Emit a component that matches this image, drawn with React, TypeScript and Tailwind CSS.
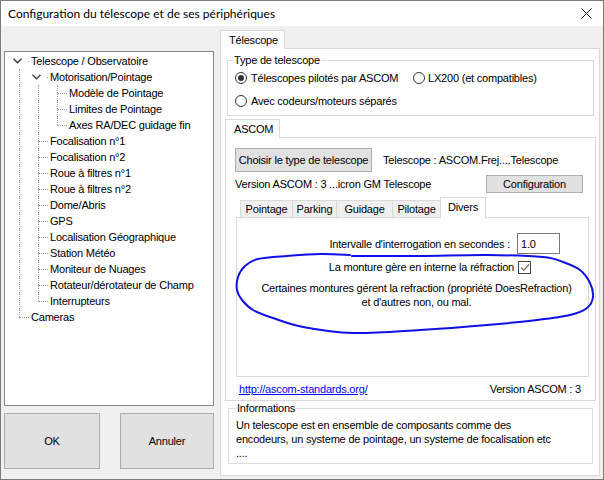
import React from 'react';

type TreeNode = {
  label: string;
  depth: number;
  anc: boolean[];
  expander?: boolean;
  last?: boolean;
};

const tree: TreeNode[] = [
  { label: 'Telescope / Observatoire', depth: 0, anc: [], expander: true },
  { label: 'Motorisation/Pointage', depth: 1, anc: [true], expander: true },
  { label: 'Modèle de Pointage', depth: 2, anc: [true, true] },
  { label: 'Limites de Pointage', depth: 2, anc: [true, true] },
  { label: 'Axes RA/DEC guidage fin', depth: 2, anc: [true, true], last: true },
  { label: 'Focalisation n°1', depth: 1, anc: [true] },
  { label: 'Focalisation n°2', depth: 1, anc: [true] },
  { label: 'Roue à filtres n°1', depth: 1, anc: [true] },
  { label: 'Roue à filtres n°2', depth: 1, anc: [true] },
  { label: 'Dome/Abris', depth: 1, anc: [true] },
  { label: 'GPS', depth: 1, anc: [true] },
  { label: 'Localisation Géographique', depth: 1, anc: [true] },
  { label: 'Station Météo', depth: 1, anc: [true] },
  { label: 'Moniteur de Nuages', depth: 1, anc: [true] },
  { label: 'Rotateur/dérotateur de Champ', depth: 1, anc: [true] },
  { label: 'Interrupteurs', depth: 1, anc: [true], last: true },
  { label: 'Cameras', depth: 0, anc: [], last: true },
];

// contour bleu dessiné à la main autour de l'explication
const loop: [number, number][] = [
  [350, 255], [320, 254], [287, 256], [258, 259], [245, 266], [238, 277], [237, 290],
  [242, 300], [253, 310], [273, 318], [303, 327], [353, 333], [420, 330], [487, 325],
  [537, 320], [570, 315], [587, 308], [593, 297], [590, 283], [580, 270], [563, 262],
  [543, 257], [487, 255], [420, 256], [352, 256],
];

function smooth(pts: [number, number][]) {
  let d = `M${pts[0][0]},${pts[0][1]}`;
  for (let i = 0; i < pts.length - 1; i++) {
    const p0 = pts[i - 1] ?? pts[i];
    const p1 = pts[i];
    const p2 = pts[i + 1];
    const p3 = pts[i + 2] ?? p2;
    const c1x = p1[0] + (p2[0] - p0[0]) / 6;
    const c1y = p1[1] + (p2[1] - p0[1]) / 6;
    const c2x = p2[0] - (p3[0] - p1[0]) / 6;
    const c2y = p2[1] - (p3[1] - p1[1]) / 6;
    d += ` C${c1x.toFixed(1)},${c1y.toFixed(1)} ${c2x.toFixed(1)},${c2y.toFixed(1)} ${p2[0]},${p2[1]}`;
  }
  return d;
}

function Chevron() {
  return (
    <svg width="9" height="6" viewBox="0 0 9 6" className="ml-[3px] shrink-0">
      <polyline points="0.5,0.8 4.5,4.8 8.5,0.8" fill="none" stroke="#3c3c3c" strokeWidth="1.3" />
    </svg>
  );
}

function TreeRow({ node }: { node: TreeNode }) {
  return (
    <div className="flex h-[16px] items-stretch">
      {node.anc.map((c, i) => (
        <div key={i} className="w-[19px] shrink-0">
          {c && <div className="ml-[9px] h-full border-l border-dotted border-[#a0a0a0]" />}
        </div>
      ))}
      {node.expander ? (
        <div className="flex w-[19px] shrink-0 items-center">
          <Chevron />
          <div className="ml-[6px] h-px w-px bg-[#a0a0a0]" />
        </div>
      ) : (
        <div className="flex w-[19px] shrink-0 flex-col">
          <div className="ml-[9px] h-[8px] border-l border-dotted border-[#a0a0a0]" />
          <div
            className={
              node.last
                ? 'ml-[9px] h-[8px] border-t border-dotted border-[#a0a0a0]'
                : 'ml-[9px] h-[8px] border-l border-t border-dotted border-[#a0a0a0]'
            }
          />
        </div>
      )}
      <span className="ml-[2px] whitespace-nowrap leading-[16px]">{node.label}</span>
    </div>
  );
}

function Radio({ checked }: { checked?: boolean }) {
  return (
    <div className="flex h-[12px] w-[12px] shrink-0 items-center justify-center rounded-full border border-[#333333] bg-white">
      {checked && <div className="h-[6px] w-[6px] rounded-full bg-[#333333]" />}
    </div>
  );
}

function Tab({ label, width, selected }: { label: string; width: string; selected?: boolean }) {
  return (
    <div
      className={
        selected
          ? `relative z-10 -mb-px flex h-[21px] ${width} items-start justify-center border-x border-t border-[#d9d9d9] bg-white pt-[2px]`
          : `flex h-[17px] ${width} items-center justify-center border-l border-t border-[#d9d9d9] bg-[#f0f0f0]`
      }
    >
      {label}
    </div>
  );
}

export default function App() {
  return (
    <div className="relative flex h-[480px] w-[604px] flex-col overflow-hidden border border-[#7a7a7a] bg-white font-['Liberation_Sans',Arial,sans-serif] text-[11px] leading-[14px] tracking-[-0.2px] text-black">
      {/* barre de titre */}
      <div className="flex h-[25px] items-center bg-white pl-[7px] pr-[11px] font-['Lato',sans-serif] text-[12px] tracking-normal">
        <span className="flex-1 whitespace-nowrap">Configuration du télescope et de ses périphériques</span>
        <svg width="11" height="11" viewBox="0 0 11 11">
          <path d="M0.5,0.5 L10.5,10.5 M10.5,0.5 L0.5,10.5" stroke="#111" strokeWidth="1" />
        </svg>
      </div>

      <div className="flex flex-1 bg-[#f0f0f0]">
        {/* colonne gauche : arbre + boutons */}
        <div className="flex flex-col pl-[3px] pt-[25px]">
          <div className="h-[355px] w-[210px] border border-[#828790] bg-white pl-[5px] pt-[1px]">
            {tree.map((n) => (
              <TreeRow key={n.label} node={n} />
            ))}
          </div>
          <div className="mt-[7px] flex gap-[20px]">
            <button className="flex h-[56px] w-[96px] items-center justify-center border border-[#adadad] bg-[#e1e1e1]">
              OK
            </button>
            <button className="flex h-[56px] w-[94px] items-center justify-center border border-[#adadad] bg-[#e1e1e1]">
              Annuler
            </button>
          </div>
        </div>

        {/* colonne droite : onglet Télescope */}
        <div className="ml-[6px] flex w-[380px] flex-col pt-[4px]">
          <div className="flex">
            <div className="relative z-10 -mb-px flex h-[19px] w-[65px] items-center border-x border-t border-[#d9d9d9] bg-white pl-[8px]">
              Télescope
            </div>
          </div>
          <div className="flex h-[428px] flex-col border border-[#d9d9d9] bg-white">
            {/* Type de telescope */}
            <div className="ml-[6px] mr-[5px] mt-[11px] h-[56px] border border-[#dcdcdc]">
              <div className="-mt-[8px] ml-[5px] w-fit bg-white px-[1px]">Type de telescope</div>
              <div className="mt-[1px] flex h-[20px] items-center pl-[7px]">
                <div className="flex w-[178px] items-center gap-[4px]">
                  <Radio checked />
                  <span className="whitespace-nowrap">Télescopes pilotés par ASCOM</span>
                </div>
                <div className="flex items-center gap-[3px]">
                  <Radio />
                  <span className="whitespace-nowrap">LX200 (et compatibles)</span>
                </div>
              </div>
              <div className="mt-[3px] flex h-[20px] items-center gap-[4px] pl-[7px]">
                <Radio />
                <span className="whitespace-nowrap">Avec codeurs/moteurs séparés</span>
              </div>
            </div>

            {/* ASCOM */}
            <div className="ml-[4px] mt-[3px] flex">
              <div className="relative z-10 -mb-px flex h-[19px] w-[55px] items-center border-x border-t border-[#d9d9d9] bg-white pl-[8px]">
                ASCOM
              </div>
            </div>
            <div className="ml-[4px] mr-[3px] flex h-[264px] flex-col border border-[#d9d9d9] bg-white">
              <div className="mt-[10px] flex items-center pl-[9px]">
                <button className="flex h-[24px] w-[137px] items-center justify-center whitespace-nowrap border border-[#adadad] bg-[#e1e1e1]">
                  Choisir le type de telescope
                </button>
                <span className="ml-[11px] whitespace-nowrap">Telescope : ASCOM.Frej....Telescope</span>
              </div>
              <div className="mt-[3px] flex h-[18px] items-center pl-[9px] pr-[12px]">
                <span className="whitespace-nowrap">Version ASCOM : 3 ...icron GM Telescope</span>
                <button className="ml-auto flex h-[18px] w-[97px] items-center justify-center border border-[#adadad] bg-[#e1e1e1]">
                  Configuration
                </button>
              </div>

              {/* onglets internes */}
              <div className="ml-[14px] mt-[4px] flex h-[20px] items-end">
                <Tab label="Pointage" width="w-[52px]" />
                <Tab label="Parking" width="w-[44px]" />
                <Tab label="Guidage" width="w-[56px]" />
                <Tab label="Pilotage" width="w-[48px]" />
                <Tab label="Divers" width="w-[46px]" selected />
              </div>
              <div className="ml-[10px] mr-[6px] flex h-[160px] flex-col border border-[#d9d9d9] bg-white">
                <div className="mr-[28px] mt-[15px] flex h-[21px] items-center justify-end gap-[7px]">
                  <span className="whitespace-nowrap">Intervalle d'interrogation en secondes :</span>
                  <div className="flex h-[21px] w-[43px] items-center border border-[#7a7a7a] pl-[3px]">1.0</div>
                </div>
                <div className="mr-[57px] mt-[3px] flex h-[20px] items-center justify-end gap-[4px]">
                  <span className="whitespace-nowrap">La monture gère en interne la réfraction</span>
                  <div className="flex h-[13px] w-[13px] items-center justify-center border border-[#444444] bg-white">
                    <svg width="10" height="9" viewBox="0 0 10 9">
                      <polyline points="1,4.5 3.8,7.2 9,1.5" fill="none" stroke="#6d6d6d" strokeWidth="1.2" />
                    </svg>
                  </div>
                </div>
                <div className="mt-[4px] pl-[8px] text-center leading-[14px]">
                  <div>Certaines montures gérent la refraction (propriété DoesRefraction)</div>
                  <div>et d'autres non, ou mal.</div>
                </div>
              </div>
              <div className="mt-[4px] flex h-[15px] items-center pl-[13px] pr-[14px]">
                <span className="whitespace-nowrap text-[#0000ff] underline">http://ascom-standards.org/</span>
                <span className="ml-auto whitespace-nowrap">Version ASCOM : 3</span>
              </div>
            </div>

            {/* Informations */}
            <div className="ml-[7px] mr-[6px] mt-[7px] h-[56px] border border-[#dcdcdc]">
              <div className="-mt-[8px] ml-[7px] w-fit bg-white px-[1px]">Informations</div>
              <div className="mt-[3px] pl-[7px] leading-[14px]">
                <div>Un telescope est en ensemble de composants comme des</div>
                <div>encodeurs, un systeme de pointage, un systeme de focalisation etc</div>
                <div>....</div>
              </div>
            </div>
          </div>
        </div>
      </div>

      <svg
        width="604"
        height="480"
        viewBox="0 0 604 480"
        className="pointer-events-none absolute left-[-1px] top-[-1px]"
      >
        <path d={smooth(loop)} fill="none" stroke="#1010e8" strokeWidth="2" strokeLinejoin="round" strokeLinecap="round" />
      </svg>
    </div>
  );
}
